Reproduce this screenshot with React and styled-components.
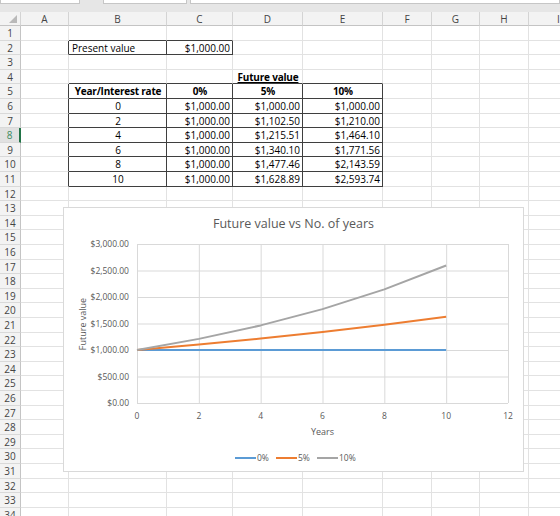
import styled, { createGlobalStyle } from "styled-components";

const GlobalStyle = createGlobalStyle`
  * { box-sizing: border-box; }
  body {
    margin: 0;
    background: #ffffff;
    font-family: "Open Sans", "Liberation Sans", sans-serif;
    overflow: hidden;
  }
`;

const GRID = "#e2e2e2";
const DARK = "#3f3f3f";
const colWidths = [21, 48, 98, 66, 70, 80, 49, 48, 49, 60];
const colNames = ["", "A", "B", "C", "D", "E", "F", "G", "H", "I"];

// Excel rows here are ~14.6px tall; round the boundaries so lines stay crisp
const bounds = Array.from({ length: 36 }, (_, i) => Math.round(26 + i * 14.6));
const rowHeights = bounds.slice(1).map((b, i) => b - bounds[i]);
const rowTemplate = `14px ${rowHeights.map((h) => h + "px").join(" ")}`;

const money = (v) =>
  "$" + v.toLocaleString("en-US", { minimumFractionDigits: 2, maximumFractionDigits: 2 });

const years = [0, 2, 4, 6, 8, 10];
const fv = (rate) => years.map((y) => 1000 * Math.pow(1 + rate, y));
const series = [
  { name: "0%", color: "#5b9bd5", values: fv(0) },
  { name: "5%", color: "#ed7d31", values: fv(0.05) },
  { name: "10%", color: "#a5a5a5", values: fv(0.1) },
];

// cell content keyed "row:col"
const cells = {
  "2:2": { text: "Present value", align: "left" },
  "2:3": { text: "$1,000.00", align: "right" },
  "4:4": { text: "Future value", align: "center", bold: true, underline: true },
  "5:2": { text: "Year/Interest rate", align: "center", bold: true },
  "5:3": { text: "0%", align: "center", bold: true },
  "5:4": { text: "5%", align: "center", bold: true },
  "5:5": { text: "10%", align: "center", bold: true },
};
years.forEach((y, i) => {
  const r = 6 + i;
  cells[`${r}:2`] = { text: String(y), align: "center" };
  series.forEach((s, j) => {
    cells[`${r}:${3 + j}`] = { text: money(s.values[i]), align: "right" };
  });
});

const boxed = (r, c) =>
  (r >= 5 && r <= 11 && c >= 2 && c <= 5) || (r === 2 && (c === 2 || c === 3));

const Page = styled.div`
  position: relative;
  width: 560px;
  height: 516px;
  overflow: hidden;
`;

const TopStrip = styled.div`
  height: 12px;
  background: #e6e6e6;
  display: flex;
  align-items: flex-start;
  gap: 3px;
`;

const StripBox = styled.div`
  height: 4px;
  width: ${(p) => p.$w}px;
  margin-left: ${(p) => p.$ml || 0}px;
  background: #ffffff;
  border: 1px solid #c6c6c6;
  border-top: none;
  ${(p) => p.$grow && "flex: 1;"}
`;

const Sheet = styled.div`
  display: grid;
  grid-template-columns: ${colWidths.map((w) => w + "px").join(" ")};
  grid-template-rows: ${rowTemplate};
`;

const ColHead = styled.div`
  background: #f3f3f3;
  border-right: 1px solid #d4d4d4;
  border-bottom: 1px solid #c4c4c4;
  color: #444444;
  font-size: 10px;
  display: flex;
  align-items: center;
  justify-content: center;
  position: relative;
`;

const RowHead = styled.div`
  background: ${(p) => (p.$active ? "#e1e1e1" : "#f3f3f3")};
  border-bottom: 1px solid #d9d9d9;
  border-right: ${(p) => (p.$active ? "2px solid #217346" : "1px solid #c4c4c4")};
  color: ${(p) => (p.$active ? "#3c8a5f" : "#444444")};
  font-size: 10px;
  display: flex;
  align-items: center;
  justify-content: center;
  line-height: 1;
`;

const Cell = styled.div`
  border-right: 1px solid ${(p) => (p.$rightDark ? DARK : GRID)};
  border-bottom: 1px solid ${(p) => (p.$bottomDark ? DARK : GRID)};
  font-size: 10px;
  color: #000000;
  font-weight: ${(p) => (p.$bold ? 700 : 400)};
  letter-spacing: ${(p) => (p.$bold ? "-0.2px" : "0")};
  text-decoration: ${(p) => (p.$underline ? "underline" : "none")};
  display: flex;
  align-items: center;
  justify-content: ${(p) =>
    p.$align === "right" ? "flex-end" : p.$align === "center" ? "center" : "flex-start"};
  padding: 0 2px 0 3px;
  white-space: nowrap;
  line-height: 1;
  overflow: visible;
`;

const Chart = styled.div`
  position: absolute;
  left: 63px;
  top: 207px;
  width: 461px;
  height: 265px;
  background: #ffffff;
  border: 1px solid #d9d9d9;
`;

const Corner = () => (
  <svg width="8" height="8" style={{ position: "absolute", right: 3, bottom: 2 }}>
    <polygon points="8,0 8,8 0,8" fill="#b9b9b9" />
  </svg>
);

function FutureValueChart() {
  const L = 73;
  const R = 444;
  const T = 36;
  const B = 195;
  const x = (v) => L + (v / 12) * (R - L);
  const y = (v) => B - (v / 3000) * (B - T);
  const yTicks = [0, 500, 1000, 1500, 2000, 2500, 3000];
  const xTicks = [0, 2, 4, 6, 8, 10, 12];
  const label = { fill: "#595959", fontFamily: "Open Sans, Liberation Sans, sans-serif" };

  return (
    <svg width="459" height="263" viewBox="0 0 459 263">
      <text x="229.5" y="20" textAnchor="middle" fontSize="12.5" {...label}>
        Future value vs No. of years
      </text>
      {yTicks.map((t) => (
        <g key={t}>
          <line x1={L} x2={R} y1={y(t) + 0.5} y2={y(t) + 0.5} stroke="#d9d9d9" />
          <text x="65" y={y(t) + 3} textAnchor="end" fontSize="8.5" {...label}>
            {money(t)}
          </text>
        </g>
      ))}
      {xTicks.map((t) => (
        <g key={t}>
          <line x1={x(t) + 0.5} x2={x(t) + 0.5} y1={T} y2={B} stroke="#d9d9d9" />
          <text x={x(t)} y="211" textAnchor="middle" fontSize="8.5" {...label}>
            {t}
          </text>
        </g>
      ))}
      <text x={x(6)} y="227" textAnchor="middle" fontSize="9" {...label}>
        Years
      </text>
      <text
        transform="translate(22 116) rotate(-90)"
        textAnchor="middle"
        fontSize="9"
        {...label}
      >
        Future value
      </text>
      {series.map((s) => (
        <polyline
          key={s.name}
          fill="none"
          stroke={s.color}
          strokeWidth="2"
          strokeLinejoin="round"
          points={s.values.map((v, i) => `${x(years[i])},${y(v)}`).join(" ")}
        />
      ))}
      {series.map((s, i) => {
        const lx = [171, 212, 253][i];
        return (
          <g key={s.name}>
            <line x1={lx} x2={lx + 21} y1="250" y2="250" stroke={s.color} strokeWidth="2" />
            <text x={lx + 22} y="253" fontSize="8.5" {...label}>
              {s.name}
            </text>
          </g>
        );
      })}
    </svg>
  );
}

export default function App() {
  const rows = Array.from({ length: 35 }, (_, i) => i + 1);
  return (
    <Page>
      <GlobalStyle />
      <TopStrip>
        <StripBox $w={80} />
        <StripBox $w={84} $ml={20} />
        <StripBox $grow />
      </TopStrip>
      <Sheet>
        {colNames.map((n, c) => (
          <ColHead key={c}>
            {n}
            {c === 0 && <Corner />}
          </ColHead>
        ))}
        {rows.map((r) =>
          colNames.map((_, c) => {
            if (c === 0) {
              return (
                <RowHead key={`${r}:0`} $active={r === 8}>
                  {r}
                </RowHead>
              );
            }
            const cell = cells[`${r}:${c}`];
            return (
              <Cell
                key={`${r}:${c}`}
                $rightDark={boxed(r, c) || boxed(r, c + 1)}
                $bottomDark={boxed(r, c) || boxed(r + 1, c)}
                $align={cell?.align}
                $bold={cell?.bold}
                $underline={cell?.underline}
              >
                {cell?.text}
              </Cell>
            );
          })
        )}
      </Sheet>
      <Chart>
        <FutureValueChart />
      </Chart>
    </Page>
  );
}
